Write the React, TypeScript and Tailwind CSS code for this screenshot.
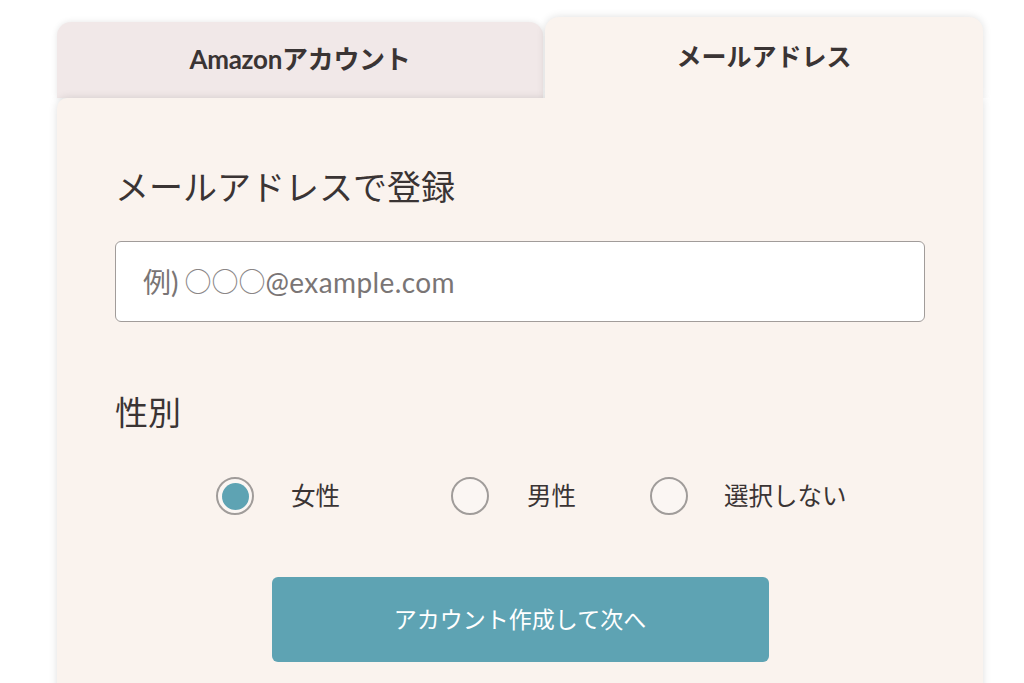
import React from "react";

const font = { fontFamily: 'Lato, "Noto Sans CJK JP", sans-serif' };

function Radio({ checked }: { checked?: boolean }) {
  return (
    <span className="flex h-[38px] w-[38px] shrink-0 items-center justify-center rounded-full border-2 border-[#a09c9a] bg-[#fbf6f3]">
      {checked && <span className="h-[27px] w-[27px] rounded-full bg-[#5ea3b3]" />}
    </span>
  );
}

export default function App() {
  return (
    <div className="min-h-screen overflow-hidden bg-white pt-[17px] text-[#3a3434]" style={font}>
      <div className="ml-[57px] w-[926px]">
        <div className="flex items-end">
          <div className="relative z-0 flex h-[76px] w-[486px] items-center justify-center rounded-t-[14px] bg-[#f1e8e8] pb-[2px] text-[26px] font-bold tracking-[-0.3px] shadow-[0_0_6px_rgba(0,0,0,0.10)]">
            Amazonアカウント
          </div>
          <div className="relative z-20 ml-[2px] flex h-[81px] flex-1 items-center justify-center rounded-t-[14px] bg-[#faf3ee] pb-[2px] text-[25px] font-bold shadow-[0_0_8px_rgba(0,0,0,0.13)] [clip-path:inset(-20px_-20px_0_-20px)]">
            メールアドレス
          </div>
        </div>
        <div className="relative z-10 h-[600px] rounded-tl-[10px] bg-[#faf3ee] pl-[58px] pr-[58px] pt-[65px] shadow-[0_0_8px_rgba(0,0,0,0.13)]">
          <h1 className="text-[34px] font-normal leading-[48px]">メールアドレスで登録</h1>
          <div className="mt-[30px] flex h-[81px] items-center rounded-[6px] border-[1.5px] border-[#a19c9a] bg-white pl-[27px] text-[28px] text-[#7a7575]">
            <span>例)</span>
            <span className="ml-[6px] text-[27px] text-[#8a8686]" style={{ fontFamily: '"Noto Sans CJK JP", sans-serif' }}>
              ○○○
            </span>
            <span className="tracking-[0.4px]">@example.com</span>
          </div>
          <h2 className="mt-[68px] text-[33px] font-normal leading-[44px]">性別</h2>
          <div className="mt-[42px] flex h-[40px] items-center pl-[101px] text-[24.5px]">
            <Radio checked />
            <span className="ml-[37px] w-[160px]">女性</span>
            <Radio />
            <span className="ml-[38px] w-[123px]">男性</span>
            <Radio />
            <span className="ml-[36px]">選択しない</span>
          </div>
          <button className="mx-auto mt-[61px] flex h-[85px] w-[497px] items-center justify-center rounded-[6px] bg-[#5ea3b3] text-[23px] text-white">
            アカウント作成して次へ
          </button>
        </div>
      </div>
    </div>
  );
}
